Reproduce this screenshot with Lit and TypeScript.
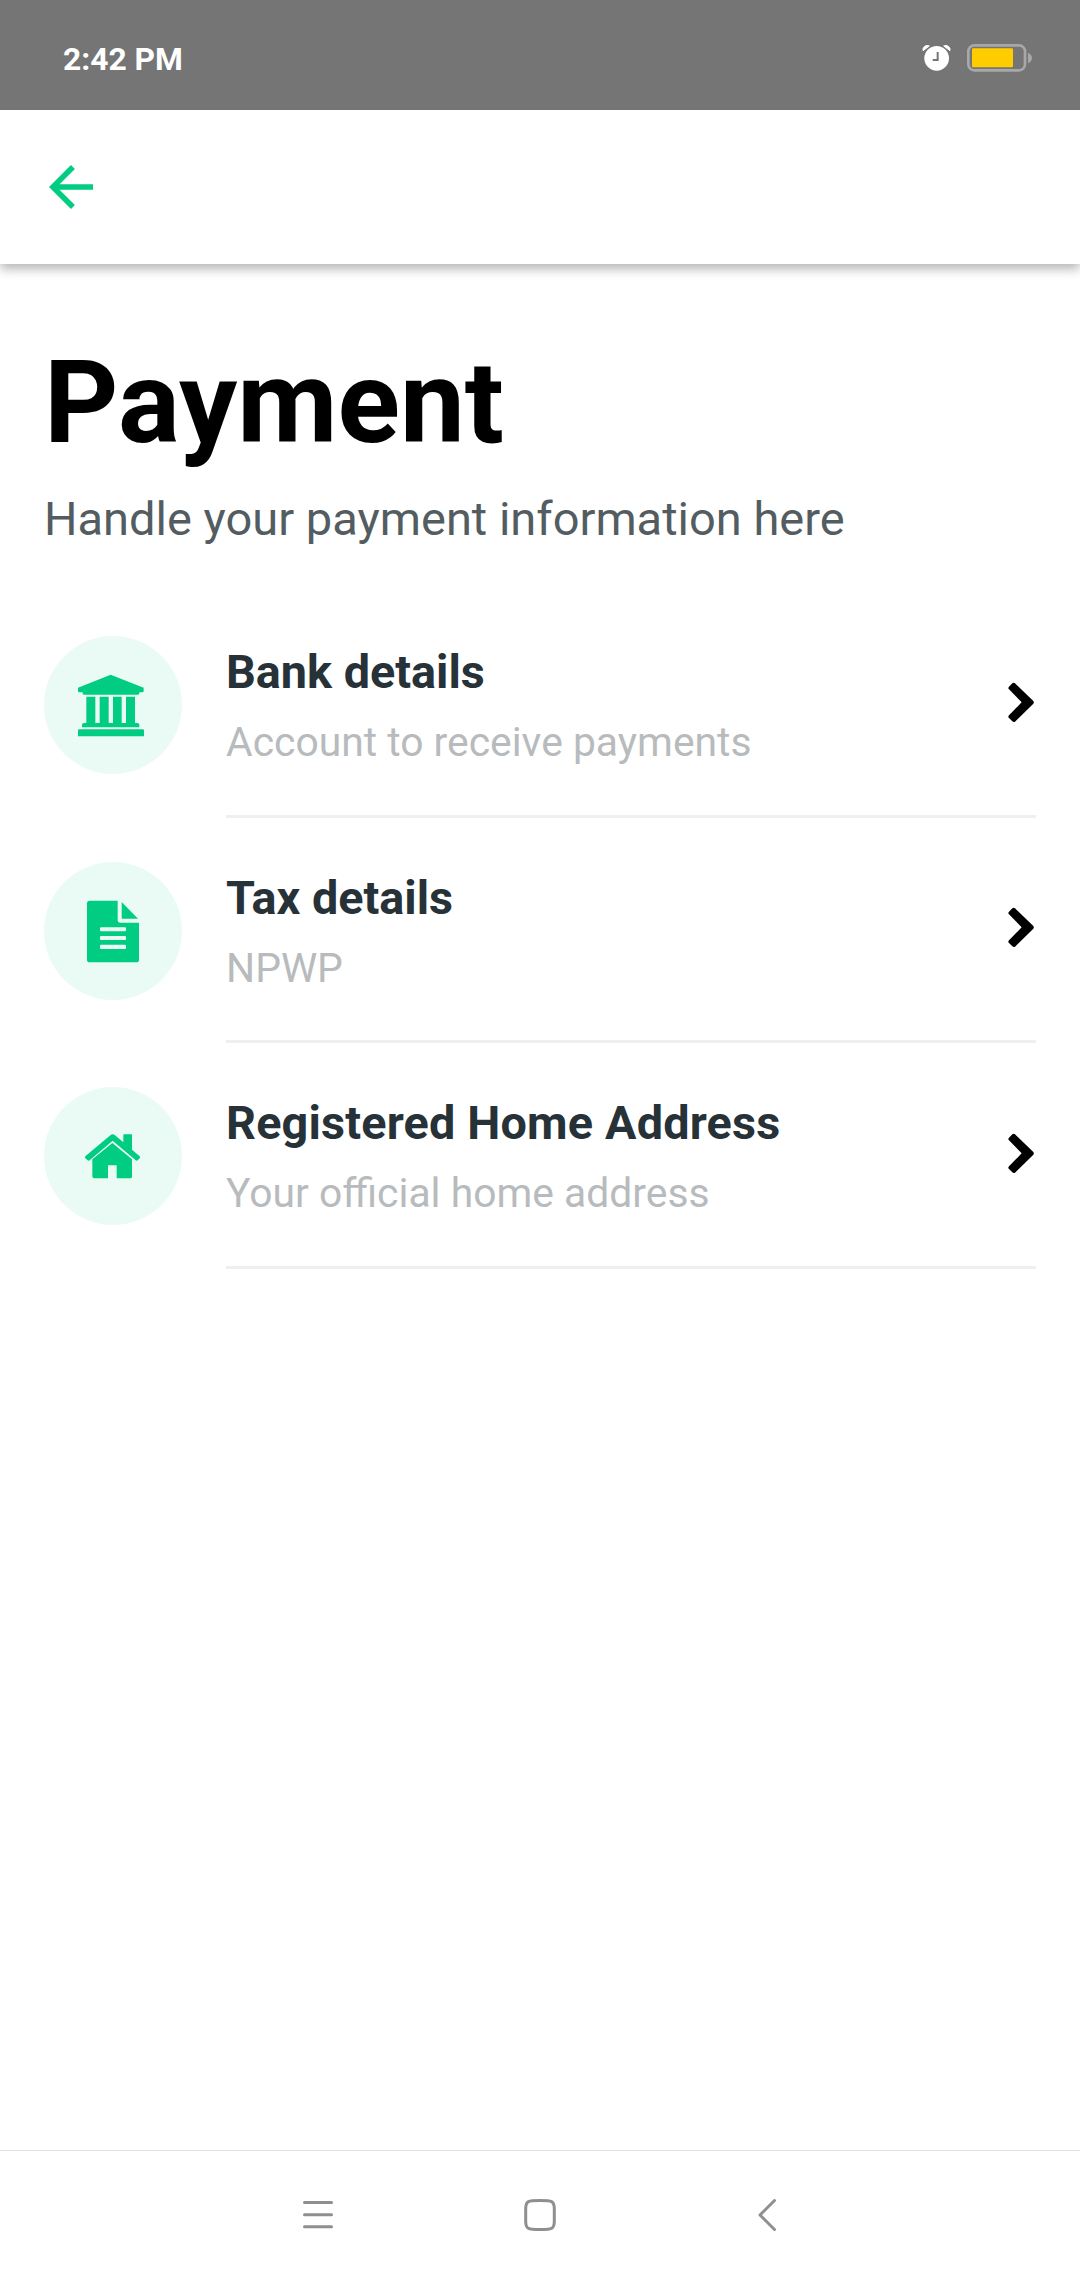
import { LitElement, html, svg, css } from "lit";
import { customElement } from "lit/decorators.js";
import { classMap } from "lit/directives/class-map.js";

const bankIcon = svg`
  <path d="M200 116L299 155V165Q299 169 295 169H286V172Q286 176 282 176H120Q116 176 116 172V169H106Q102 169 102 165V155Z"/>
  <path d="M127 182h27v79h13v-79h27v79h13v-79h26v79h13v-79h27v79h7q6 0 6 6v7H114v-7q0-6 6-6h7z"/>
  <path d="M106 280H296Q300 280 300 284V301H102V284Q102 280 106 280Z"/>`;

const fileIcon = svg`
  <path fill-rule="evenodd" d="M137 116H221V174Q221 182 229 182H285V293Q285 301 277 301H137Q129 301 129 293V124Q129 116 137 116Z
    M171 196Q168 196 168 199V205Q168 208 171 208H243Q246 208 246 205V199Q246 196 243 196Z
    M171 222Q168 222 168 225V231Q168 234 171 234H243Q246 234 246 231V225Q246 222 243 222Z
    M171 248Q168 248 168 251V257Q168 261 171 261H243Q246 261 246 257V251Q246 248 243 248Z"/>
  <path d="M233 120L282 170H233Z"/>`;

const homeIcon = svg`
  <path d="M124 208L199 145Q206 139 213 145L238 166V144Q238 142 240 142H262Q264 142 264 144V188L287 208Q290 211 287 214L281 220Q278 222 275 220L206 161L137 220Q134 222 131 220L124 214Q121 211 124 208Z"/>
  <path d="M205 168L264 217V269Q264 274 259 274H218V235H192V274H151Q145 274 145 268V217Z"/>`;

const items = [
  { icon: bankIcon, title: "Bank details", note: "Account to receive payments", wide: false },
  { icon: fileIcon, title: "Tax details", note: "NPWP", wide: false },
  { icon: homeIcon, title: "Registered Home Address", note: "Your official home address", wide: true },
];

@customElement("app-root")
export class AppRoot extends LitElement {
  static styles = css`
    :host {
      display: flex;
      flex-direction: column;
      height: 2280px;
      background: #fff;
      font-family: Roboto, "Liberation Sans", sans-serif;
      overflow: hidden;
    }
    svg { display: block; flex: none; }
    .status {
      height: 110px;
      flex: none;
      box-sizing: border-box;
      padding: 0 47px 0 63px;
      background: #757575;
      color: #fff;
      display: flex;
      align-items: center;
      justify-content: space-between;
    }
    .time { font-size: 31.8px; line-height: 38px; font-weight: 700; padding-top: 7px; }
    .indicators { margin-top: 5px; }
    .bar {
      height: 154px;
      flex: none;
      display: flex;
      align-items: center;
      padding-left: 38px;
      background: #fff;
      box-shadow: 0 5px 10px rgba(0, 0, 0, 0.29);
      clip-path: inset(0 0 -30px 0);
    }
    .back { width: 66px; height: 66px; fill: #00cc82; }
    main { flex: 1; padding: 70px 44px 0; }
    h1 { margin: 0; font-size: 115.7px; line-height: 137px; font-weight: 700; color: #000; }
    .lead { margin: 20px 0 46.4px; font-size: 47.03px; line-height: 55px; color: #535d61; }
    .row {
      height: 225.5px;
      display: grid;
      grid-template-columns: 138px 1fr;
      column-gap: 44px;
    }
    .badge {
      width: 138px;
      height: 138px;
      margin-top: 43.7px;
      border-radius: 50%;
      background: #eafbf6;
    }
    .badge svg { width: 138px; height: 138px; fill: #00cc82; }
    .body {
      display: flex;
      justify-content: space-between;
      align-items: flex-start;
      border-bottom: 3px solid #efefef;
    }
    .texts { padding-top: 52.8px; }
    .title { font-size: 46.75px; line-height: 55px; font-weight: 700; color: #263238; }
    .title.wide { letter-spacing: 0.19px; }
    .note { margin-top: 18px; font-size: 40.85px; line-height: 48px; color: #b7bbbd; }
    .chevron { width: 28px; height: 41px; margin-top: 89.2px; }
    .nav {
      height: 129px;
      flex: none;
      border-top: 1px solid #e3e3e3;
      display: flex;
      justify-content: center;
    }
    .nav svg { width: 540px; height: 129px; fill: none; stroke: #8f8f8f; stroke-width: 3; stroke-linecap: round; }
  `;

  render() {
    return html`
      <div class="status">
        <span class="time">2:42 PM</span>
        <svg class="indicators" width="113" height="32" viewBox="60 65 339 96">
          <path d="M69 91A13 13 0 0 1 88 77ZM150 91A13 13 0 0 0 131 77Z" fill="#fff" stroke="#fff" stroke-width="3" stroke-linejoin="round"/>
          <circle cx="110" cy="114" r="40" fill="#757575"/>
          <circle cx="110" cy="114" r="37" fill="#fff"/>
          <path d="M113 95V119H98" fill="none" stroke="#757575" stroke-width="6"/>
          <rect x="205" y="75" width="170" height="75" rx="18" fill="none" stroke="#a8a8a8" stroke-width="8"/>
          <rect x="216" y="84" width="123" height="57" rx="4" fill="#ffcc00"/>
          <path d="M384 97Q396 103 396 113T384 129Z" fill="#a8a8a8"/>
        </svg>
      </div>
      <div class="bar">
        <svg class="back" viewBox="0 0 24 24">
          <path d="M20 11H7.83l5.59-5.59L12 4l-8 8 8 8 1.41-1.41L7.83 13H20v-2z"/>
        </svg>
      </div>
      <main>
        <h1>Payment</h1>
        <p class="lead">Handle your payment information here</p>
        ${items.map(
          (item) => html`
            <div class="row">
              <div class="badge"><svg viewBox="0 0 414 414">${item.icon}</svg></div>
              <div class="body">
                <div class="texts">
                  <div class=${classMap({ title: true, wide: item.wide })}>${item.title}</div>
                  <div class="note">${item.note}</div>
                </div>
                <svg class="chevron" viewBox="0 0 84 123">
                  <path d="M3 14L13 4Q17 0 21 4L76 57Q79 61 76 65L21 119Q17 122 13 118L3 108Q-1 104 3 100L41 61L3 22Q-1 18 3 14Z"/>
                </svg>
              </div>
            </div>
          `
        )}
      </main>
      <div class="nav">
        <svg viewBox="270 2151 540 129">
          <path d="M304.5 2202.500H331.5M304.5 2214.800H331.5M304.5 2226.800H331.5"/>
          <path d="M540 2200.500C552 2200.500 554 2201 554.300 2208V2222C554 2229 552 2229.500 540 2229.500S526 2229 525.700 2222V2208C526 2201 528 2200.500 540 2200.500Z"/>
          <path d="M774.500 2200.500L760 2215L774.500 2229.500" stroke-linejoin="round"/>
        </svg>
      </div>
    `;
  }
}
